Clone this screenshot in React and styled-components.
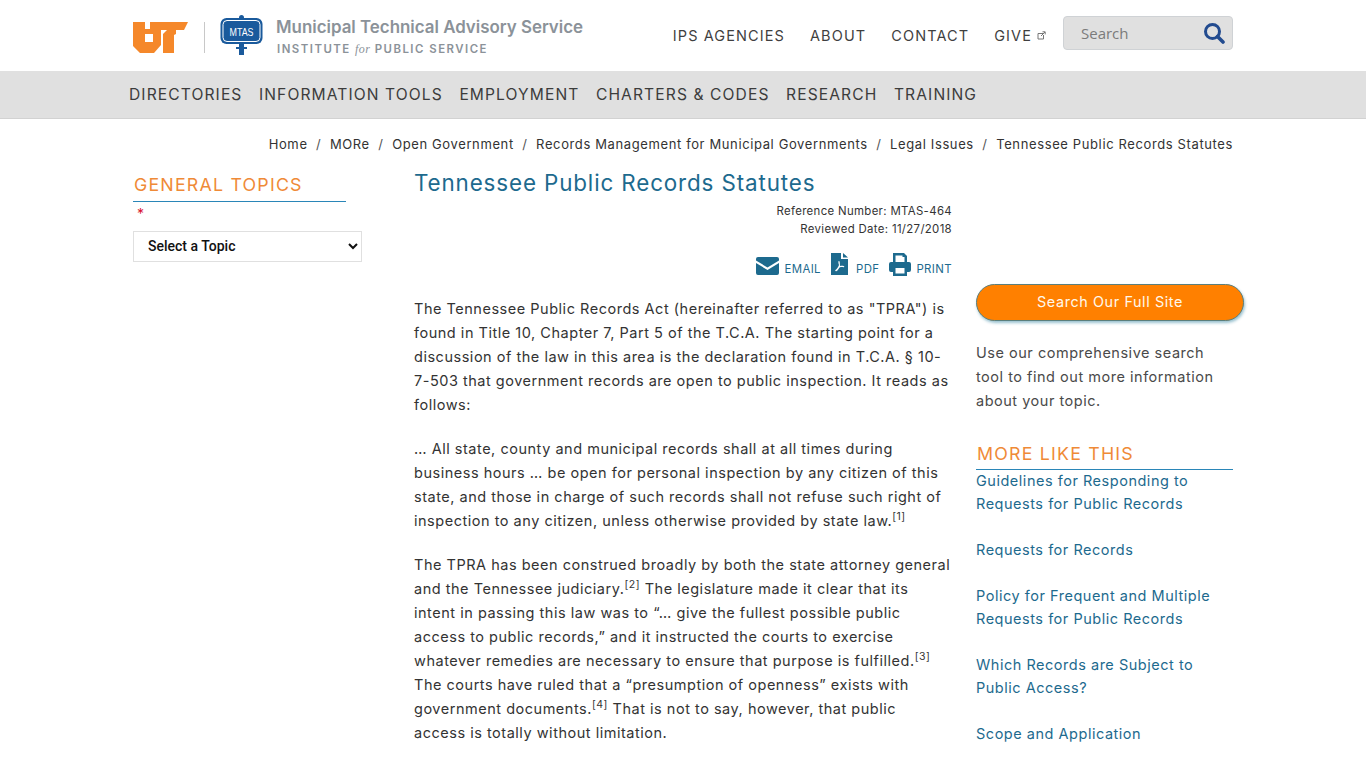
import React from 'react'
import styled, { createGlobalStyle } from 'styled-components'

const GlobalStyle = createGlobalStyle`
  html, body {
    margin: 0;
    padding: 0;
    background: #fff;
    height: 768px;
    overflow: hidden;
  }
  body {
    font-family: Inter, "Liberation Sans", sans-serif;
    color: #333;
  }
`

const Header = styled.header`
  height: 71px;
  width: 1100px;
  margin: 0 auto;
  display: flex;
  align-items: flex-start;
  justify-content: space-between;
`

const Brand = styled.div`
  display: flex;
  align-items: flex-start;
  padding-top: 15px;
`

const BrandText = styled.div`
  margin-left: 13px;
  color: #8b9299;
  font-weight: 600;
`

const BrandTitle = styled.div`
  font-size: 16.9px;
  line-height: 24px;
`

const BrandSub = styled.div`
  font-size: 11.4px;
  line-height: 16px;
  letter-spacing: 1.5px;
  margin-top: 2px;
  margin-left: 1px;

  em {
    font-family: "Liberation Serif", serif;
    font-size: 12px;
    font-weight: 400;
    letter-spacing: 0.4px;
  }
`

const TopRight = styled.div`
  display: flex;
  align-items: flex-start;
`

const TopLinks = styled.nav`
  display: flex;
  gap: 25px;
  padding-top: 27px;
  margin-right: 17px;
`

const TopLink = styled.a`
  display: flex;
  align-items: center;
  font-size: 14.5px;
  line-height: 18px;
  letter-spacing: 1.1px;
  font-weight: 400;
  color: #3f3f3f;
`

const SearchBox = styled.div`
  width: 170px;
  height: 34px;
  margin-top: 16px;
  box-sizing: border-box;
  background: #e0e0e0;
  border: 1px solid #cfd2d5;
  border-radius: 4px;
  display: flex;
  align-items: center;
  justify-content: space-between;
  padding: 0 7px 0 17px;
  font-family: "Open Sans", sans-serif;
  font-size: 15px;
  color: #7b7b7b;
`

const MainNav = styled.nav`
  height: 47px;
  background: #e0e0e0;
  border-bottom: 1px solid #d2d2d2;
`

const MainNavInner = styled.div`
  width: 1108px;
  margin: 0 auto;
  height: 100%;
  display: flex;
  align-items: center;
  gap: 16.5px;
`

const MainNavLink = styled.a`
  font-size: 15.6px;
  letter-spacing: 1.1px;
  color: #3c3c3c;
`

const Breadcrumb = styled.div`
  width: 1100px;
  margin: 0 auto;
  height: 50px;
  display: flex;
  justify-content: flex-end;
  align-items: center;
  font-size: 13px;
  letter-spacing: 0.62px;
  color: #333;
`

const Crumb = styled.span`
  & + &::before {
    content: '/';
    margin: 0 8.5px;
    color: #555;
  }
`

const Columns = styled.div`
  width: 1100px;
  margin: 0 auto;
  display: flex;
  align-items: flex-start;
`

const LeftColumn = styled.aside`
  width: 229px;
  flex: none;
`

const SectionTitle = styled.h3`
  margin: 0;
  font-size: 17.8px;
  line-height: 22px;
  font-weight: 400;
  letter-spacing: 1.2px;
  color: #ef8a37;
  border-bottom: 1px solid #2a86b8;
`

const LeftTitle = styled(SectionTitle)`
  width: 212px;
  padding: 5px 0 5px 1px;
`

const Required = styled.div`
  color: #d8102f;
  font-size: 14px;
  line-height: 20px;
  padding: 2px 0 0 4px;
  height: 18px;
`

const TopicSelect = styled.select`
  display: block;
  width: 229px;
  height: 31px;
  margin-top: 9px;
  padding: 0 8px 2px 10px;
  background: #fff;
  border: 1px solid #e0e0e0;
  font-family: Roboto, sans-serif;
  font-size: 14px;
  font-weight: 500;
  color: #111;
`

const MainColumn = styled.main`
  width: 538px;
  flex: none;
  margin-left: 52px;
`

const PageTitle = styled.h1`
  margin: 0;
  font-size: 22.4px;
  line-height: 28px;
  font-weight: 400;
  letter-spacing: 0.87px;
  color: #1d6a8e;
`

const Meta = styled.div`
  margin-top: 5px;
  text-align: right;
  font-size: 11.4px;
  line-height: 18px;
  letter-spacing: 0.34px;
  color: #333;
`

const Tools = styled.div`
  display: flex;
  justify-content: flex-end;
  align-items: flex-end;
  gap: 10px;
  margin-top: 14px;
  height: 24px;
`

const Tool = styled.a`
  display: flex;
  align-items: flex-end;
  gap: ${(p) => p.$gap || 5}px;
  font-size: 11.4px;
  line-height: 14px;
  letter-spacing: 0.4px;
  color: #1d6a8e;
`

const Body = styled.div`
  margin-top: 21px;
`

const Para = styled.p`
  margin: 0 0 20px;
  font-size: 14.5px;
  line-height: 24px;
  letter-spacing: 0.52px;
  color: #333;

  sup {
    font-size: 10.5px;
    line-height: 0;
  }
`

const RightColumn = styled.aside`
  flex: none;
  margin-left: 24px;
  width: 257px;
  padding-top: 115px;
`

const FullSiteButton = styled.a`
  display: block;
  width: 268px;
  height: 37px;
  box-sizing: border-box;
  background: #ff8000;
  border: 1px solid #5b7f7c;
  border-radius: 19px;
  box-shadow: 1px 2px 3px rgba(30, 120, 150, 0.45);
  color: #fff8ec;
  text-align: center;
  font-size: 14.4px;
  line-height: 34px;
  letter-spacing: 0.6px;
`

const SideText = styled.p`
  margin: 20px 0 0;
  font-size: 14.5px;
  line-height: 24px;
  letter-spacing: 0.52px;
  color: #4a4a4a;
`

const MoreTitle = styled(SectionTitle)`
  margin-top: 30px;
  padding: 0 0 4px 1px;
`

const MoreList = styled.div`
  display: flex;
  flex-direction: column;
  gap: 23px;
  margin-top: -1px;
`

const MoreLink = styled.a`
  display: block;
  font-size: 14.5px;
  line-height: 23px;
  letter-spacing: 0.52px;
  color: #1d6a8e;
`

const UtLogo = () => (
  <svg width="55" height="31" viewBox="0 0 55 31" style={{ display: 'block', marginTop: 7 }}>
    <path fill="#f5882a" fillRule="evenodd" d="M0 0h12v7h5V0h38l-4 8H43v4l-2 1v18H30V12l4-4H28v15l-7 8H7l-7-7ZM12 12v8h8v-8Z" />
  </svg>
)

const Divider = styled.div`
  width: 1px;
  height: 31px;
  background: #c8c8c8;
  margin: 7px 15px 0 16px;
`

const MtasLogo = () => (
  <svg width="43" height="40" viewBox="0 0 43 40" style={{ display: 'block' }}>
    <circle cx="21.5" cy="2.500" r="2.500" fill="#1a5a9c" />
    <rect x="19" y="28" width="5" height="12" fill="#1a5a9c" />
    <rect x="16" y="32" width="11" height="2" fill="#1a5a9c" />
    <rect x="0.500" y="3" width="42" height="26" rx="6" fill="#1a5a9c" />
    <rect x="3" y="5.500" width="37" height="21" rx="4" fill="none" stroke="#fff" strokeWidth="1" />
    <text x="21.5" y="21" textAnchor="middle" fontFamily="Liberation Sans, sans-serif" fontSize="11" fill="#fff" textLength="24" lengthAdjust="spacingAndGlyphs">MTAS</text>
  </svg>
)

const ExternalIcon = () => (
  <svg width="9" height="9" viewBox="0 0 9 9" style={{ marginLeft: 5, marginTop: -2 }} fill="none" stroke="#777" strokeWidth="1">
    <path d="M6 2.500H1v5.500h5.500V4" />
    <path d="M4 5l4-4M5.500 .8H8.200V3.400" />
  </svg>
)

const SearchIcon = () => (
  <svg width="22" height="22" viewBox="0 0 22 22" fill="none" stroke="#224b8f">
    <circle cx="9.500" cy="9.500" r="7" strokeWidth="3" />
    <path d="M14.500 14.500L20 20" strokeWidth="3.600" strokeLinecap="round" />
  </svg>
)

const EmailIcon = () => (
  <svg width="23" height="18" viewBox="0 0 23 18" style={{ display: 'block', marginBottom: 1 }}>
    <path fill="#1d6a8e" d="M2 0h19a2 2 0 0 1 2 2v1.500l-11.500 7L0 3.500V2a2 2 0 0 1 2-2Z" />
    <path fill="#1d6a8e" d="M0 6l11.500 7L23 6v10a2 2 0 0 1-2 2H2a2 2 0 0 1-2-2Z" />
  </svg>
)

const PdfIcon = () => (
  <svg width="17" height="22" viewBox="0 0 17 22" style={{ display: 'block', marginBottom: 1 }}>
    <path fill="#1d6a8e" fillRule="evenodd" d="M0 0h10v6h7v16H0ZM12 0l5 4.500h-5Z M8 8c-.8 0-.8 2 0 4-.8 2-1.800 3.600-3.500 5-.8.800.2 1.800 1.200 1 1-.8 2-2.200 2.800-3.600 1.300-.3 2.600-.4 3.800-.2 1 .2 1.500-1 .3-1.300-1.200-.2-2.600-.1-3.500 0C8.700 11 9 8 8 8Z" />
  </svg>
)

const PrintIcon = () => (
  <svg width="22" height="23" viewBox="0 0 22 23" style={{ display: 'block' }}>
    <path fill="#1d6a8e" fillRule="evenodd" d="M4 0h11l3 3v6h2a2 2 0 0 1 2 2v6a2 2 0 0 1-2 2h-2v4H4v-4H2a2 2 0 0 1-2-2v-6a2 2 0 0 1 2-2h2ZM6.500 2.500V9h9V4h-2V2.500ZM6.500 15v5.500h9V15Z" />
  </svg>
)

const App = () => (
  <>
    <GlobalStyle />
    <Header>
      <Brand>
        <UtLogo />
        <Divider />
        <MtasLogo />
        <BrandText>
          <BrandTitle>Municipal Technical Advisory Service</BrandTitle>
          <BrandSub>INSTITUTE <em>for</em> PUBLIC SERVICE</BrandSub>
        </BrandText>
      </Brand>
      <TopRight>
        <TopLinks>
          <TopLink>IPS AGENCIES</TopLink>
          <TopLink>ABOUT</TopLink>
          <TopLink>CONTACT</TopLink>
          <TopLink>GIVE<ExternalIcon /></TopLink>
        </TopLinks>
        <SearchBox>
          Search
          <SearchIcon />
        </SearchBox>
      </TopRight>
    </Header>
    <MainNav>
      <MainNavInner>
        <MainNavLink>DIRECTORIES</MainNavLink>
        <MainNavLink>INFORMATION TOOLS</MainNavLink>
        <MainNavLink>EMPLOYMENT</MainNavLink>
        <MainNavLink>CHARTERS &amp; CODES</MainNavLink>
        <MainNavLink>RESEARCH</MainNavLink>
        <MainNavLink>TRAINING</MainNavLink>
      </MainNavInner>
    </MainNav>
    <Breadcrumb>
      <Crumb>Home</Crumb>
      <Crumb>MORe</Crumb>
      <Crumb>Open Government</Crumb>
      <Crumb>Records Management for Municipal Governments</Crumb>
      <Crumb>Legal Issues</Crumb>
      <Crumb>Tennessee Public Records Statutes</Crumb>
    </Breadcrumb>
    <Columns>
      <LeftColumn>
        <LeftTitle>GENERAL TOPICS</LeftTitle>
        <Required>*</Required>
        <TopicSelect defaultValue="">
          <option value="">Select a Topic</option>
        </TopicSelect>
      </LeftColumn>
      <MainColumn>
        <PageTitle>Tennessee Public Records Statutes</PageTitle>
        <Meta>
          Reference Number: MTAS-464<br />
          Reviewed Date: 11/27/2018
        </Meta>
        <Tools>
          <Tool><EmailIcon />EMAIL</Tool>
          <Tool $gap={8}><PdfIcon />PDF</Tool>
          <Tool><PrintIcon />PRINT</Tool>
        </Tools>
        <Body>
          <Para>
            The Tennessee Public Records Act (hereinafter referred to as "TPRA") is found in Title 10, Chapter 7, Part 5 of the T.C.A. The starting point for a discussion of the law in this area is the declaration found in T.C.A. § 10-7-503 that government records are open to public inspection. It reads as follows:
          </Para>
          <Para>
            … All state, county and municipal records shall at all times during business hours … be open for personal inspection by any citizen of this state, and those in charge of such records shall not refuse such right of inspection to any citizen, unless otherwise provided by state law.<sup>[1]</sup>
          </Para>
          <Para>
            The TPRA has been construed broadly by both the state attorney general and the Tennessee judiciary.<sup>[2]</sup> The legislature made it clear that its intent in passing this law was to “… give the fullest possible public access to public records,” and it instructed the courts to exercise whatever remedies are necessary to ensure that purpose is fulfilled.<sup>[3]</sup> The courts have ruled that a “presumption of openness” exists with government documents.<sup>[4]</sup> That is not to say, however, that public access is totally without limitation.
          </Para>
        </Body>
      </MainColumn>
      <RightColumn>
        <FullSiteButton>Search Our Full Site</FullSiteButton>
        <SideText>Use our comprehensive search tool to find out more information about your topic.</SideText>
        <MoreTitle>MORE LIKE THIS</MoreTitle>
        <MoreList>
          <MoreLink>Guidelines for Responding to Requests for Public Records</MoreLink>
          <MoreLink>Requests for Records</MoreLink>
          <MoreLink>Policy for Frequent and Multiple Requests for Public Records</MoreLink>
          <MoreLink>Which Records are Subject to Public Access?</MoreLink>
          <MoreLink>Scope and Application</MoreLink>
        </MoreList>
      </RightColumn>
    </Columns>
  </>
)

export default App
